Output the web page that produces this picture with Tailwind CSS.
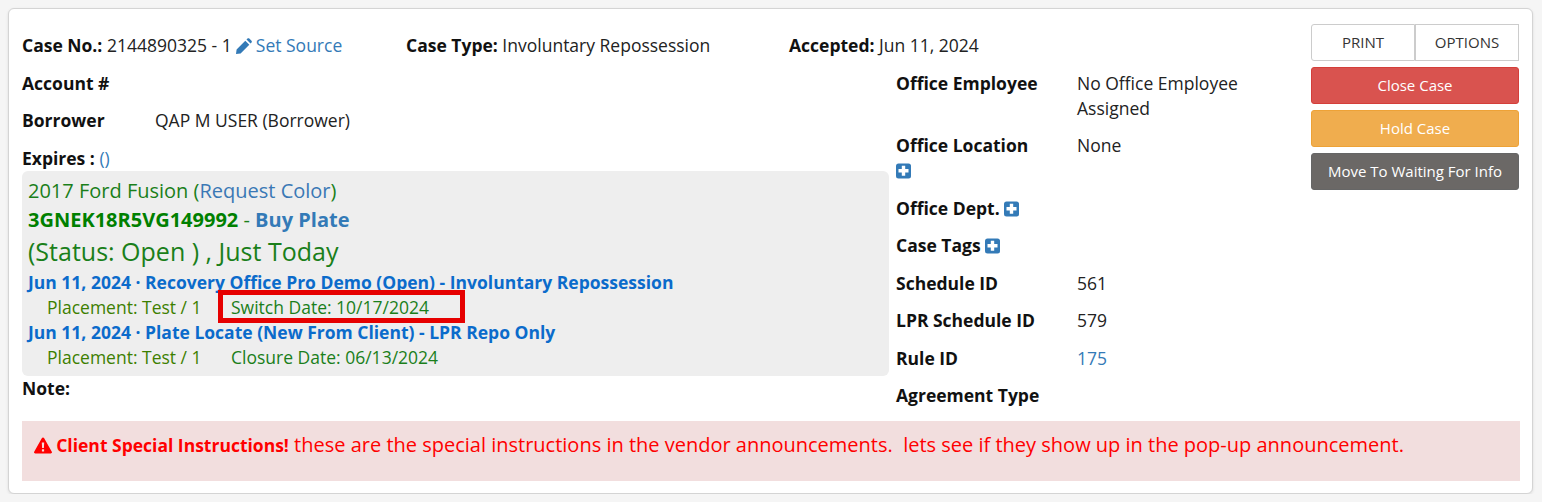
<!DOCTYPE html>
<html lang="en">
<head>
    <meta charset="UTF-8">
    <title>Case Summary</title>
    <script src="https://cdn.jsdelivr.net/npm/@tailwindcss/browser@4"></script>
</head>
<body class="bg-[#f5f5f5] font-['Open_Sans',sans-serif] text-[17.5px] leading-[25px] text-[#222]">
    <div class="ml-2 mt-2 h-[486px] w-[1525px] rounded-md border border-[#d4d4d4] bg-white pl-[13px] shadow-[0_1px_3px_rgba(0,0,0,0.1)]">
        <div class="flex">
            <!-- Case details -->
            <div class="w-[1289px]">
                <div class="flex h-[65px] items-start pt-[24px]">
                    <div class="w-[384px]"><b class="font-bold text-[#111]">Case No.:</b> 2144890325 - 1
                        <a class="text-[#337ab7]"><svg class="mr-[-1px] inline-block h-[16px] w-[16px] align-[-2px]" viewBox="0 0 16 16"><path fill="#337ab7" d="M10.500 1.500l1-1c.5-.5 1.300-.5 1.800 0l2.200 2.200c.5.5.5 1.300 0 1.800l-1 1zM9.300 2.700l4 4-8.700 8.700L0 16l.6-4.600z"/></svg> Set Source</a>
                    </div>
                    <div class="w-[383px]"><b class="font-bold text-[#111]">Case Type:</b> Involuntary Repossession</div>
                    <div><b class="font-bold text-[#111]">Accepted:</b> Jun 11, 2024</div>
                </div>
                <div class="flex">
                    <div class="w-[867px]">
                        <div class="mt-[-3px] h-[37px] font-bold text-[#111]">Account #</div>
                        <div class="flex h-[38px]"><b class="w-[133px] font-bold text-[#111]">Borrower</b><span>QAP M USER (Borrower)</span></div>
                        <div class="h-[25px]"><b class="font-bold text-[#111]">Expires :</b> <a class="text-[#337ab7]">()</a></div>
                        <!-- Vehicle box -->
                        <div class="h-[205px] rounded-md bg-[#eeeeee] px-[6px] pt-[8px] text-[#1a7f1a]">
                            <div class="text-[20px] leading-[24px]">2017 Ford Fusion (<a class="text-[#3a78b5]">Request Color</a>)</div>
                            <div class="mt-[5px] text-[20px] leading-[24px]"><b class="font-bold text-[#008000]">3GNEK18R5VG149992</b> - <a class="font-bold text-[#337ab7]">Buy Plate</a></div>
                            <div class="mt-[1px] text-[25px] leading-[36px]">(Status: Open ) , Just Today</div>
                            <div class="mt-[1px] font-bold text-[#0b6bcb]">Jun 11, 2024 · Recovery Office Pro Demo (Open) - Involuntary Repossession</div>
                            <div class="flex pl-[19px]">
                                <span class="w-[184px] text-[#3d7f00]">Placement: Test / 1</span>
                                <span class="relative">Switch Date: 10/17/2024<span class="absolute left-[-13px] right-[-36px] top-[-5px] bottom-[-3px] border-[5px] border-[#e60000]"></span></span>
                            </div>
                            <div class="font-bold text-[#0b6bcb]">Jun 11, 2024 · Plate Locate (New From Client) - LPR Repo Only</div>
                            <div class="flex pl-[19px]">
                                <span class="w-[184px] text-[#3d7f00]">Placement: Test / 1</span>
                                <span>Closure Date: 06/13/2024</span>
                            </div>
                        </div>
                        <div class="font-bold text-[#111]">Note:</div>
                    </div>
                    <!-- Office details -->
                    <div class="ml-[7px] w-[415px]">
                        <div class="mt-[-3.4px] flex pb-[12.5px]"><b class="w-[181px] shrink-0 font-bold text-[#111]">Office Employee</b><span class="w-[200px]">No Office Employee Assigned</span></div>
                        <div class="flex pb-[12.5px]"><b class="w-[181px] shrink-0 font-bold text-[#111]">Office Location<br><svg class="inline-block h-[16px] w-[16px] align-[-2px]" viewBox="0 0 16 16"><rect width="15" height="15" y="0.5" rx="2.500" fill="#337ab7"/><path d="M5.800 2.800h3.400v3.300h3.300v3.400H9.200v3.300H5.800V9.500H2.500V6.100h3.300z" fill="#fff"/></svg></b><span>None</span></div>
                        <div class="pb-[12.5px] font-bold text-[#111]">Office Dept. <svg class="inline-block h-[16px] w-[16px] align-[-2px]" viewBox="0 0 16 16"><rect width="15" height="15" y="0.5" rx="2.500" fill="#337ab7"/><path d="M5.800 2.800h3.400v3.300h3.300v3.400H9.200v3.300H5.800V9.500H2.500V6.100h3.300z" fill="#fff"/></svg></div>
                        <div class="pb-[12.5px] font-bold text-[#111]">Case Tags <svg class="inline-block h-[16px] w-[16px] align-[-2px]" viewBox="0 0 16 16"><rect width="15" height="15" y="0.5" rx="2.500" fill="#337ab7"/><path d="M5.800 2.800h3.400v3.300h3.300v3.400H9.200v3.300H5.800V9.500H2.500V6.100h3.300z" fill="#fff"/></svg></div>
                        <div class="flex pb-[12.5px]"><b class="w-[181px] font-bold text-[#111]">Schedule ID</b><span>561</span></div>
                        <div class="flex pb-[12.5px]"><b class="w-[181px] font-bold text-[#111]">LPR Schedule ID</b><span>579</span></div>
                        <div class="flex pb-[12.5px]"><b class="w-[181px] font-bold text-[#111]">Rule ID</b><a class="text-[#337ab7]">175</a></div>
                        <div class="font-bold text-[#111]">Agreement Type</div>
                    </div>
                </div>
            </div>
            <!-- Actions -->
            <div class="w-[208px] pt-[15px] text-[15px]">
                <div class="flex h-[37px]">
                    <button class="w-[104px] rounded-l-[3px] border border-[#ccc] bg-white text-[#333]">PRINT</button>
                    <button class="w-[104px] border border-[#ccc] bg-white text-[#333]">OPTIONS</button>
                </div>
                <button class="mt-[6px] block h-[37px] w-full rounded-[3px] border border-[#d43f3a] bg-[#d9534f] text-white">Close Case</button>
                <button class="mt-[6px] block h-[37px] w-full rounded-[3px] border border-[#eea236] bg-[#f0ad4e] text-white">Hold Case</button>
                <button class="mt-[6px] block h-[37px] w-full rounded-[3px] border border-[#666] bg-[#6b6866] text-white">Move To Waiting For Info</button>
            </div>
        </div>
        <!-- Special instructions -->
        <div class="mt-[12.4px] h-[60px] w-[1498px] bg-[#f2dede] px-[12px] pt-[10px] text-[20px] leading-[27px] text-[#ff0000]">
            <svg class="mr-[-1px] inline-block h-[17px] w-[18px] align-[-2px]" viewBox="0 0 18 16"><path fill="#f00" fill-rule="evenodd" d="M9 0c.5 0 .9.3 1.200.7l7.600 13.500c.5.800-.1 1.800-1.100 1.800H1.300c-1 0-1.600-1-1.100-1.800L7.800.7C8.100.3 8.500 0 9 0zM7.800 5l.3 5.500h1.800L10.200 5zM7.900 11.800v2.200h2.200v-2.200z"/></svg>
            <b class="text-[17.5px] font-bold">Client Special Instructions!</b> these are the special instructions in the vendor announcements.&nbsp; lets see if they show up in the pop-up announcement.
        </div>
    </div>
</body>
</html>
